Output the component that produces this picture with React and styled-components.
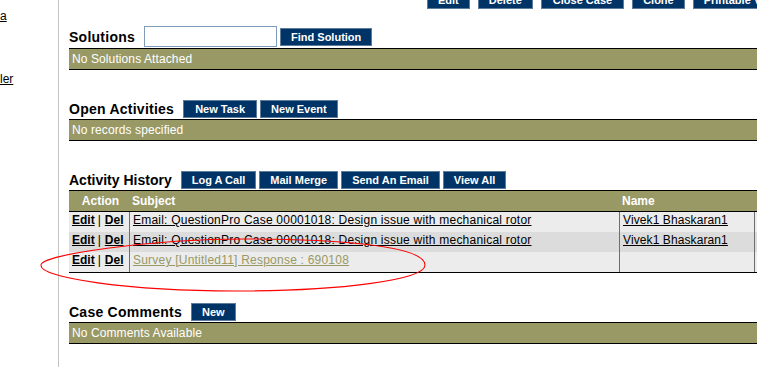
import React from "react";
import styled, { createGlobalStyle } from "styled-components";

const GlobalStyle = createGlobalStyle`
  html, body { margin: 0; padding: 0; overflow: hidden; background: #fff; }
  body { font-family: "Liberation Sans", Arial, sans-serif; font-size: 12px; color: #000; }
`;

const Page = styled.div`
  position: relative;
  display: flex;
  width: 900px;
  height: 367px;
`;

const Sidebar = styled.nav`
  width: 58px;
  flex-shrink: 0;
  border-right: 1px solid #c4c4c4;
  display: flex;
  flex-direction: column;
  align-items: flex-start;
  gap: 48px;
  padding-top: 9px;
`;

const SideLink = styled.a`
  display: block;
  color: #000;
  text-decoration: underline;
  font-size: 12px;
  line-height: 15px;
`;

const Main = styled.main`
  flex: 1;
  min-width: 0;
  padding-left: 10px;
  display: flex;
  flex-direction: column;
`;

const Toolbar = styled.div`
  display: flex;
  gap: 8px;
  padding-left: 358px;
  margin-top: -9px;
`;

const Button = styled.button`
  flex-shrink: 0;
  height: 18px;
  box-sizing: border-box;
  padding: 0 ${(p) => (p.$wide ? 11 : 10)}px;
  background: #003366;
  color: #fff;
  border: 1px solid #5d7b9b;
  font-family: "Liberation Sans", Arial, sans-serif;
  font-weight: bold;
  font-size: 11px;
  line-height: 16px;
  white-space: nowrap;
  cursor: pointer;
`;

const Section = styled.section`
  margin-top: ${(p) => (p.$first ? 17 : 30)}px;
`;

const SectionHeader = styled.div`
  display: flex;
  align-items: center;
  gap: 3px;
  padding-bottom: 1px;
`;

const Title = styled.h3`
  margin: 0 6px 0 0;
  font-size: 14px;
  font-weight: bold;
  line-height: 16px;
  letter-spacing: ${(p) => (p.$tight ? "0" : "0.25px")};
  white-space: nowrap;
`;

const SearchInput = styled.input`
  width: 133px;
  height: 21px;
  box-sizing: border-box;
  border: 1px solid #7f9db9;
  padding: 0 2px;
  margin: 0;
  font-size: 12px;
`;

const Bar = styled.div`
  border-top: 1px solid #000;
  border-bottom: 1px solid #000;
  background: #999966;
  color: #fff;
  height: 20px;
  line-height: 20px;
  padding-left: 3px;
  letter-spacing: 0.1px;
  white-space: nowrap;
`;

const Grid = styled.div`
  display: grid;
  grid-template-columns: 60px 490px 135px 1fr;
  border-top: 1px solid #000;
  border-bottom: 1px solid #000;
`;

const HeadCell = styled.div`
  background: #999966;
  color: #fff;
  font-weight: bold;
  height: 21px;
  box-sizing: border-box;
  border-bottom: 1px solid #000;
  line-height: 20px;
  padding-left: 3px;
  text-align: ${(p) => (p.$center ? "center" : "left")};
  white-space: nowrap;
`;

const Cell = styled.div`
  background: ${(p) => (p.$alt ? "#dcdcdc" : "#ececec")};
  height: 20px;
  box-sizing: border-box;
  padding: 1px 3px 0;
  line-height: 14px;
  white-space: nowrap;
  overflow: hidden;
  border-left: ${(p) => (p.$divider ? "1px solid #6e6e6e" : "none")};
`;

const ActionLink = styled.a`
  color: #000;
  font-weight: bold;
  text-decoration: underline;
`;

const Sep = styled.span`
  margin: 0 4px 0 3px;
`;

const RowLink = styled.a`
  color: ${(p) => (p.$muted ? "#999966" : "#000")};
  text-decoration: underline;
  letter-spacing: ${(p) => (p.$name ? "0.1px" : "0.22px")};
`;

const Overlay = styled.svg`
  position: absolute;
  left: 0;
  top: 0;
  width: 757px;
  height: 367px;
  pointer-events: none;
`;

const rows = [
  { subject: "Email: QuestionPro Case 00001018: Design issue with mechanical rotor", name: "Vivek1 Bhaskaran1" },
  { subject: "Email: QuestionPro Case 00001018: Design issue with mechanical rotor", name: "Vivek1 Bhaskaran1" },
  { subject: "Survey [Untitled11] Response : 690108", name: "", muted: true },
];

export default function App() {
  return (
    <>
      <GlobalStyle />
      <Page>
        <Sidebar>
          <SideLink href="#">a</SideLink>
          <SideLink href="#">ler</SideLink>
        </Sidebar>
        <Main>
          <Toolbar>
            <Button>Edit</Button>
            <Button>Delete</Button>
            <Button $wide>Close Case</Button>
            <Button>Clone</Button>
            <Button>Printable View</Button>
          </Toolbar>

          <Section $first>
            <SectionHeader>
              <Title>Solutions</Title>
              <SearchInput type="text" />
              <Button>Find Solution</Button>
            </SectionHeader>
            <Bar>No Solutions Attached</Bar>
          </Section>

          <Section>
            <SectionHeader>
              <Title>Open Activities</Title>
              <Button $wide>New Task</Button>
              <Button>New Event</Button>
            </SectionHeader>
            <Bar>No records specified</Bar>
          </Section>

          <Section>
            <SectionHeader>
              <Title $tight>Activity History</Title>
              <Button>Log A Call</Button>
              <Button>Mail Merge</Button>
              <Button>Send An Email</Button>
              <Button>View All</Button>
            </SectionHeader>
            <Grid>
              <HeadCell $center>Action</HeadCell>
              <HeadCell>Subject</HeadCell>
              <HeadCell>Name</HeadCell>
              <HeadCell />
              {rows.map((r, i) => (
                <React.Fragment key={i}>
                  <Cell $alt={i === 1}>
                    <ActionLink href="#">Edit</ActionLink>
                    <Sep>|</Sep>
                    <ActionLink href="#">Del</ActionLink>
                  </Cell>
                  <Cell $alt={i === 1} $divider>
                    <RowLink href="#" $muted={r.muted}>{r.subject}</RowLink>
                  </Cell>
                  <Cell $alt={i === 1} $divider>
                    {r.name && <RowLink href="#" $name>{r.name}</RowLink>}
                  </Cell>
                  <Cell $alt={i === 1} $divider />
                </React.Fragment>
              ))}
            </Grid>
          </Section>

          <Section>
            <SectionHeader>
              <Title>Case Comments</Title>
              <Button>New</Button>
            </SectionHeader>
            <Bar>No Comments Available</Bar>
          </Section>
        </Main>

        <Overlay viewBox="0 0 757 367">
          <path
            d="M41,265 C41,255 150,239 245,239 C330,239 425,245 425,265 C425,280 340,291 235,291 C130,291 39,278 41,265 Z"
            fill="none"
            stroke="#ff0000"
            strokeWidth="1.1"
          />
        </Overlay>
      </Page>
    </>
  );
}
